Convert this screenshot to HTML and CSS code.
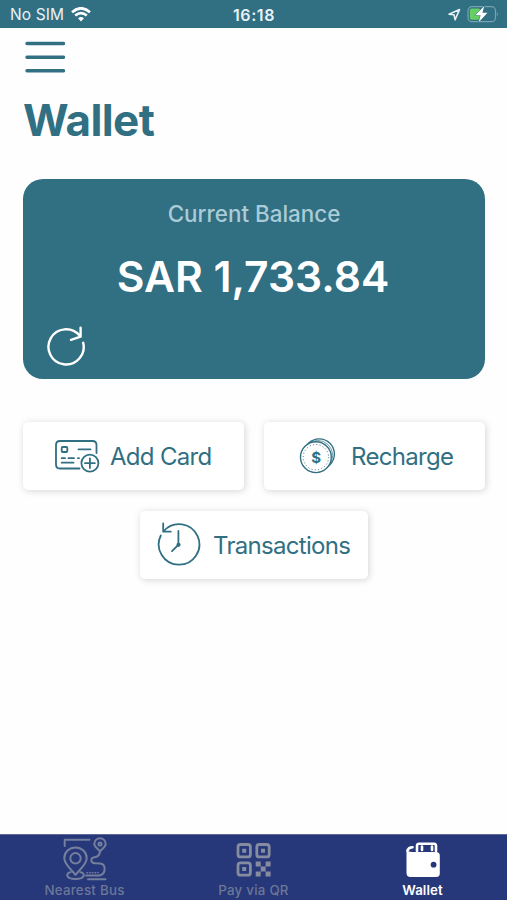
FILE: index.html
```html
<!DOCTYPE html>
<html lang="en">
<head>
  <meta charset="UTF-8">
  <meta name="viewport" content="width=device-width, initial-scale=1.0">
  <link rel="stylesheet" href="styles.css">
  <title>Wallet</title>
</head>
<body>
  <header class="status-bar">
    <div class="carrier">
      <span>No SIM</span>
      <svg width="20" height="15" viewBox="71 7 20 15" fill="none" stroke="#fff" stroke-width="2.7">
        <path d="M72 12.2Q81 4.4 90 12.2M75.2 15.6Q81 10.6 86.8 15.6"/>
        <path d="M78 18.3Q81 15.6 84 18.3L81 21.4Z" fill="#fff" stroke="none"/>
      </svg>
    </div>
    <span class="time">16:18</span>
    <div class="power">
      <svg width="52" height="20" viewBox="446 5 52 20">
        <path d="M449 14.200L459.500 9.600L455.100 19.800L454 14.700Z" fill="none" stroke="#e5f1f4" stroke-width="1.600" stroke-linejoin="round"/>
        <rect x="468" y="6.700" width="27.500" height="15" rx="4" fill="none" stroke="#76a3af" stroke-width="1.2"/>
        <rect x="469.800" y="8.600" width="10.500" height="11.200" rx="2" fill="#65cf65"/>
        <path d="M496.800 12Q498.500 14 496.800 16.500Z" fill="#76a3af"/>
        <path d="M484.300 6L475.300 15.200H480.600L478.700 22.200L487.500 12.800H482.400Z" fill="#fff" stroke="#316f83" stroke-width="1" paint-order="stroke"/>
      </svg>
    </div>
  </header>

  <main>
    <button class="menu-button" aria-label="Menu">
      <svg width="40" height="32" viewBox="25 41 40 32" stroke="#316f83" stroke-width="3.400" stroke-linecap="round">
        <path d="M27 43.500H63.500M27 57.200H63.500M27 70.800H63.500"/>
      </svg>
    </button>
    <h1>Wallet</h1>

    <section class="balance">
      <p class="balance-label">Current Balance</p>
      <p class="balance-amount">SAR 1,733.84</p>
      <button class="refresh" aria-label="Refresh">
        <svg width="42" height="42" viewBox="45 325 42 42" fill="none" stroke="#fff" stroke-width="2.400" stroke-linecap="round" stroke-linejoin="round">
          <path d="M83.200 342.800A17.600 17.600 0 1 1 79.600 335.600M80.600 327.600V336.700L71 339.800"/>
        </svg>
      </button>
    </section>

    <section class="actions">
      <button class="action">
        <svg width="46" height="36" viewBox="54 439 46 36" fill="none" stroke="#316f83" stroke-width="1.800" stroke-linecap="round">
          <path d="M79.500 469.500H60Q56 469.500 56 465.500V446Q56 442 60 442H92.500Q96.500 442 96.500 446V454"/>
          <rect x="61.700" y="448" width="5.600" height="5" rx="1"/>
          <path d="M78.500 450.300H90.500M61.700 459.200H65M68.500 459.200H74M78 459.200H79M61.700 463.700H73.500"/>
          <circle cx="89.900" cy="464.200" r="8.500"/>
          <path d="M85 464.200H94.800M89.900 459.300V469.100"/>
        </svg>
        <span>Add Card</span>
      </button>
      <button class="action recharge">
        <svg width="38" height="38" viewBox="299 437 38 38" fill="none" stroke="#316f83">
          <circle cx="319.200" cy="454" r="15.200" stroke-width="1.300"/>
          <circle cx="317.600" cy="455.600" r="15.200" stroke-width=".7"/>
          <circle cx="315.900" cy="457.200" r="15.400" fill="#fff" stroke-width="1.400"/>
          <circle cx="315.900" cy="457.200" r="12.700" stroke-width="1" stroke-dasharray="1 2.325"/>
          <text class="coin-sign" x="315.900" y="462.600" text-anchor="middle">$</text>
        </svg>
        <span>Recharge</span>
      </button>
      <button class="action transactions">
        <svg width="46" height="46" viewBox="156 521 46 46" fill="none" stroke="#316f83" stroke-width="1.800" stroke-linecap="round" stroke-linejoin="round">
          <path d="M161.800 535.500A20.300 20.300 0 1 0 164.800 531M164.200 523.500V531.700H171.800"/>
          <path d="M179.400 531V544.800L173 551.200"/>
          <circle cx="179.500" cy="544.800" r="1.200" fill="#316f83"/>
        </svg>
        <span>Transactions</span>
      </button>
    </section>
  </main>

  <nav class="tab-bar">
    <a class="tab nearest">
      <svg width="46" height="44" viewBox="62 837 46 44" fill="none" stroke="#747f9c" stroke-width="2" stroke-linecap="round" stroke-linejoin="round">
        <path d="M64.700 846V839.800H89.500"/>
        <path d="M75.500 875C72 870 64.300 864.500 64.300 858.200A11.200 10.800 0 0 1 86.700 858.200C86.700 864.500 79 870 75.500 875Z"/>
        <circle cx="75.500" cy="858.300" r="5.200"/>
        <path d="M70.500 872.300C65.500 872.800 65.500 879 75.500 879S85.500 872.800 80.500 872.300"/>
        <path d="M100 851.300C97.500 848.300 94.300 846.800 94.300 843.900A5.700 5.700 0 0 1 105.700 843.900C105.700 846.800 102.500 848.300 100 851.300Z"/>
        <circle cx="100" cy="844" r="1.600"/>
        <path d="M100 852Q99 856.800 94.500 857.200Q91.300 857.500 91.300 860.200Q91.300 863 95 863.200L100 863.500Q104.600 864 104.600 868.600Q104.600 874.600 99.500 875.500H86M88 879.200H105.500"/>
        <path d="M87 872.700H98" stroke-width="1.600" stroke-dasharray=".5 2.200"/>
      </svg>
      <span>Nearest Bus</span>
    </a>
    <a class="tab">
      <svg width="36" height="36" viewBox="236 841 36 36" fill="none" stroke="#858c9f" stroke-width="2.800">
        <rect x="238" y="843.500" width="12.400" height="12.400" rx="2.500"/>
        <rect x="256.800" y="843.500" width="12.400" height="12.400" rx="2.500"/>
        <rect x="238" y="861.800" width="12.400" height="12.400" rx="2.500"/>
        <path d="M242.200 847.700h4v4h-4zM261 847.700h4v4h-4zM242.200 866h4v4h-4zM255.700 860.400h5v5h-5zM265.600 860.400h5v5h-5zM260.700 865.400h5v5h-5zM255.700 870.400h5v5h-5zM265.600 870.400h5v5h-5z" fill="#858c9f" stroke="none"/>
      </svg>
      <span>Pay via QR</span>
    </a>
    <a class="tab active">
      <svg width="36" height="38" viewBox="404 840 36 38">
        <path d="M406.500 849.700Q407.500 846.200 411.500 846.200M416 850V845Q416 842.800 418 842.800H433Q435 842.800 435 845V850M421 845.500V849M431 845.500V849" fill="none" stroke="#fff" stroke-width="2.600" stroke-linecap="round"/>
        <path d="M405.500 848.500Q407 851 411 851H435Q438.800 851 438.800 854.500V872.500Q438.800 876 435 876H409.500Q405.500 876 405.500 872Z" fill="#fff"/>
        <circle cx="432.600" cy="863.700" r="2.900" fill="#25367a"/>
      </svg>
      <span>Wallet</span>
    </a>
  </nav>
</body>
</html>
```

FILE: styles.css
```css
:root {
  --color-teal: #316f83;
  --color-blue: #26377a;
  --color-white: #fff;
  --color-page: #fefefe;
  --color-muted: #6c7797;
}

* {
  margin: 0;
  padding: 0;
  box-sizing: border-box;
}

body {
  display: flex;
  flex-direction: column;
  height: 100vh;
  overflow: hidden;
  font-family: Inter, "Liberation Sans", sans-serif;
  color: var(--color-teal);
  background-color: var(--color-page);
}

button {
  font: inherit;
  color: inherit;
  background: none;
  border: none;
  cursor: pointer;
}

svg {
  display: block;
  flex-shrink: 0;
}

.status-bar {
  display: grid;
  grid-template-columns: 1fr auto 1fr;
  align-items: center;
  height: 28px;
  padding: 1px 9px 0 10px;
  color: #e9f3f6;
  background-color: var(--color-teal);
  font-size: 15.5px;
}

.carrier {
  display: flex;
  align-items: center;
  gap: 7px;
  letter-spacing: 0.1px;
}

.time {
  font-weight: 600;
  font-size: 16px;
  letter-spacing: 0.6px;
}

.power {
  display: flex;
  justify-content: flex-end;
}

main {
  flex: 1;
  padding: 13px 22px 0 23px;
}

.menu-button {
  display: block;
  margin-left: 2px;
}

h1 {
  margin-top: 20px;
  font-size: 44px;
  font-weight: 700;
  line-height: 54px;
  letter-spacing: -0.6px;
}

.balance {
  display: flex;
  flex-direction: column;
  align-items: center;
  height: 200px;
  margin-top: 32px;
  padding-top: 21px;
  border-radius: 20px;
  background-color: var(--color-teal);
}

.balance-label {
  color: #a9ccd7;
  font-size: 22.4px;
  font-weight: 500;
  line-height: 28px;
}

.balance-amount {
  margin-top: 24px;
  margin-right: 2px;
  color: var(--color-white);
  font-size: 42.6px;
  font-weight: 600;
  line-height: 50px;
}

.refresh {
  align-self: flex-start;
  margin: 23px 0 0 22px;
}

.actions {
  display: flex;
  flex-wrap: wrap;
  justify-content: space-between;
  row-gap: 21px;
  margin-top: 43px;
}

.action {
  display: flex;
  align-items: center;
  gap: 10px;
  width: 221px;
  height: 68px;
  padding-left: 31px;
  border-radius: 5px;
  background-color: var(--color-white);
  box-shadow: 1px 1px 7px rgba(0, 0, 0, 0.17);
  font-size: 24px;
  letter-spacing: -0.7px;
  white-space: nowrap;
}

.recharge {
  gap: 14px;
  padding-left: 35px;
}

.transactions {
  gap: 12px;
  width: 228px;
  margin-left: 117px;
  padding-left: 15px;
}

.transactions svg {
  margin-top: -2px;
}

.coin-sign {
  fill: var(--color-teal);
  stroke: none;
  font-size: 15px;
  font-weight: 700;
}

.tab-bar {
  display: grid;
  grid-template-columns: repeat(3, 1fr);
  height: 66px;
  border-top: 1px solid #5d6a96;
  background-color: var(--color-blue);
}

.tab {
  display: flex;
  flex-direction: column;
  align-items: center;
  justify-content: flex-end;
  padding-bottom: 2px;
  color: var(--color-muted);
  font-size: 13.3px;
  font-weight: 500;
  line-height: 16px;
  letter-spacing: 0.25px;
}

.tab svg {
  margin-bottom: 4px;
}

.tab.nearest svg {
  margin-bottom: 1px;
}

.tab.active {
  color: var(--color-white);
  font-weight: 600;
  letter-spacing: 0.1px;
}

.tab.active svg {
  margin-bottom: 3px;
}
```
